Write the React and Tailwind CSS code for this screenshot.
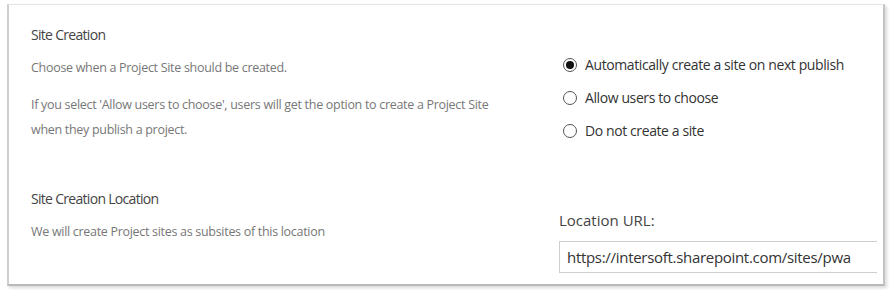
import React from "react";

function Radio({ checked, label }) {
  return (
    <div className="flex items-center h-[33px]">
      <span className="w-[14px] h-[14px] rounded-full border border-[#555] flex items-center justify-center mr-[8px] shrink-0">
        {checked && <span className="w-[8px] h-[8px] rounded-full bg-[#111]" />}
      </span>
      <span className="text-[14px] text-[#333] tracking-[-0.4px]">{label}</span>
    </div>
  );
}

export default function App() {
  return (
    <div className="w-[892px] h-[297px] bg-white pt-[4px] pl-[7px]" style={{ fontFamily: '"Open Sans", "Noto Sans", sans-serif' }}>
      <div className="w-[878px] h-[282px] border-t border-t-[#e4e4e4] border-l-2 border-l-[#cfcfcf] border-r-2 border-r-[#c4c4c4] border-b-2 border-b-[#b9b9b9] shadow-[2px_2px_3px_rgba(0,0,0,0.15)] flex flex-col">
        <div className="flex pt-[20px] h-[160px]">
          <div className="pl-[22px] w-[550px]">
            <div className="text-[14px] text-[#444] leading-[20px] tracking-[-0.7px]">Site Creation</div>
            <div className="mt-[13px] text-[12.5px] text-[#777] leading-[20px] tracking-[-0.3px]">Choose when a Project Site should be created.</div>
            <div className="mt-[14px] text-[12.5px] text-[#777] leading-[25px] tracking-[-0.3px]">
              If you select 'Allow users to choose', users will get the option to create a Project Site
              <br />
              when they publish a project.
            </div>
          </div>
          <div className="pl-[4px] pt-[23px]">
            <Radio checked label="Automatically create a site on next publish" />
            <Radio label="Allow users to choose" />
            <Radio label="Do not create a site" />
          </div>
        </div>
        <div className="flex h-[120px]">
          <div className="pl-[22px] w-[550px] pt-[25px]">
            <div className="text-[14px] text-[#444] leading-[20px] tracking-[-0.7px]">Site Creation Location</div>
            <div className="mt-[13px] text-[12.5px] text-[#777] leading-[20px] tracking-[-0.3px]">We will create Project sites as subsites of this location</div>
          </div>
          <div className="pt-[46px] flex-1">
            <div className="text-[15px] text-[#444] leading-[20px]">Location URL:</div>
            <div className="mt-[11px] mr-[6px] h-[32px] border-t border-b border-l border-[#cfcfcf] flex items-center pl-[7px] text-[15px] text-[#333] tracking-[-0.3px]">
              https://intersoft.sharepoint.com/sites/pwa
            </div>
          </div>
        </div>
      </div>
    </div>
  );
}
